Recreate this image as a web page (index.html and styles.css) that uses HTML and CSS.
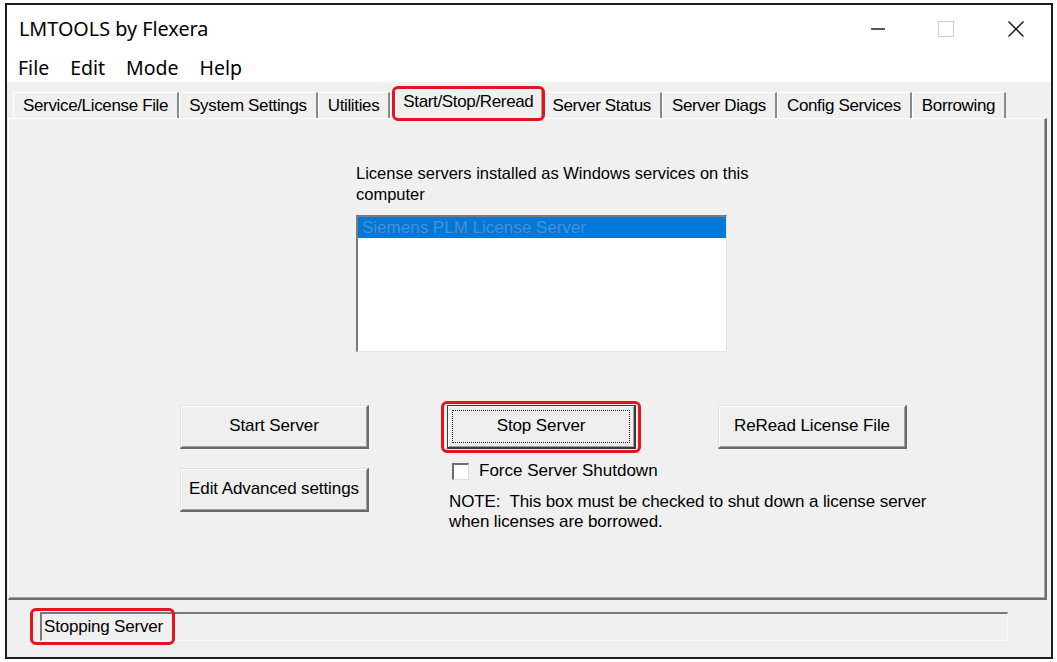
FILE: index.html
```html
<!DOCTYPE html>
<html>
<head>
<meta charset="utf-8">
<title>LMTOOLS by Flexera</title>
<link rel="stylesheet" href="styles.css">
</head>
<body>
<div class="window">
  <div class="titlebar">
    <span class="title">LMTOOLS by Flexera</span>
    <div class="controls">
      <span class="ctl ctl-min"><svg width="14" height="2" viewBox="0 0 14 2"><line x1="0" y1="1" x2="14" y2="1" stroke="#111" stroke-width="1.4"/></svg></span>
      <span class="ctl ctl-max"><svg width="16" height="16" viewBox="0 0 16 16"><rect x="0.5" y="0.5" width="15" height="15" fill="none" stroke="#cfcfcf" stroke-width="1.2"/></svg></span>
      <span class="ctl ctl-close"><svg width="16" height="16" viewBox="0 0 16 16"><path d="M0.5 0.5 L15.5 15.5 M15.5 0.5 L0.5 15.5" stroke="#111" stroke-width="1.4" fill="none"/></svg></span>
    </div>
  </div>
  <div class="menubar">
    <span class="menu">File</span>
    <span class="menu">Edit</span>
    <span class="menu">Mode</span>
    <span class="menu">Help</span>
  </div>
  <div class="client">
    <div class="tabs">
      <span class="tab">Service/License File</span>
      <span class="tab">System Settings</span>
      <span class="tab">Utilities</span>
      <span class="tab tab-active">Start/Stop/Reread</span>
      <span class="tab">Server Status</span>
      <span class="tab">Server Diags</span>
      <span class="tab">Config Services</span>
      <span class="tab">Borrowing</span>
    </div>
    <div class="panel">
      <div class="listgroup">
        <p class="label">License servers installed as Windows services on this<br>computer</p>
        <div class="listbox">
          <div class="item item-sel">Siemens PLM License Server</div>
        </div>
      </div>
      <div class="actions">
        <div class="col col1">
          <button class="btn">Start Server</button>
          <button class="btn">Edit Advanced settings</button>
        </div>
        <div class="col col2">
          <button class="btn btn-default"><span class="focus">Stop Server</span></button>
          <label class="check"><span class="box"></span><span>Force Server Shutdown</span></label>
          <p class="note">NOTE:&nbsp; This box must be checked to shut down a license server<br>when licenses are borrowed.</p>
        </div>
        <div class="col col3">
          <button class="btn">ReRead License File</button>
        </div>
      </div>
    </div>
    <div class="statusbar">
      <div class="field"><span class="status-text">Stopping Server</span></div>
    </div>
  </div>
</div>
</body>
</html>
```
FILE: styles.css
```css
html, body {
  margin: 0;
  padding: 0;
  background: #ffffff;
}

body {
  font-family: "Liberation Sans", Arial, sans-serif;
  font-size: 17px;
  color: #000;
}

.window {
  box-sizing: border-box;
  width: 1048px;
  height: 656px;
  margin: 3px 0 0 5px;
  border: 2px solid #1e1e1e;
  background: #f0f0f0;
  display: flex;
  flex-direction: column;
}

/* title bar */
.titlebar {
  height: 43px;
  background: #fff;
  display: flex;
  align-items: center;
  padding-top: 4px;
  box-sizing: border-box;
}

.title {
  font-family: "Noto Sans", "Open Sans", sans-serif;
  font-size: 19.8px;
  padding-left: 12px;
}

.controls {
  margin-left: auto;
  display: flex;
  align-items: center;
  height: 100%;
}

.ctl {
  display: flex;
  align-items: center;
  justify-content: center;
  height: 100%;
}

.ctl svg { display: block; }
.ctl-min { width: 66px; }
.ctl-max { width: 70px; }
.ctl-close { width: 70px; }

/* menu bar */
.menubar {
  height: 34px;
  background: #fff;
  display: flex;
  align-items: center;
  gap: 21px;
  padding: 4px 0 0 11px;
  box-sizing: border-box;
  font-family: "Noto Sans", "Open Sans", sans-serif;
  font-size: 19.5px;
}

/* client area */
.client {
  flex: 1;
  display: flex;
  flex-direction: column;
  background: #f0f0f0;
}

.tabs {
  height: 36px;
  box-sizing: border-box;
  padding: 6px 0 0 6px;
  display: flex;
  align-items: flex-end;
}

.tab {
  height: 26px;
  box-sizing: border-box;
  padding: 0 9px 0 9px;
  display: flex;
  align-items: center;
  border-left: 1px solid #fff;
  border-top: 1px solid #fff;
  border-right: 2px solid #8a8a8a;
  white-space: nowrap;
  letter-spacing: -0.35px;
}

.tab-active {
  position: relative;
  height: 30px;
  padding: 0 8px 4px 7px;
  margin-left: 5px;
  border-right: 1px solid #a0a0a0;
  background: #f0f0f0;
}

.tab-active::after {
  content: "";
  position: absolute;
  left: -4px;
  right: -4px;
  top: -3px;
  bottom: -3px;
  border: 3px solid #e5141b;
  border-radius: 6px;
  box-sizing: border-box;
}

.panel {
  height: 482px;
  box-sizing: border-box;
  margin: 0 4px 0 1px;
  border-top: 1px solid #fff;
  border-left: 1px solid #fff;
  border-right: 2px solid #6e6e6e;
  border-bottom: 2px solid #6e6e6e;
  box-shadow: inset -1px -1px 0 #a0a0a0;
}

.listgroup {
  margin-left: 347px;
  padding-top: 44px;
}

.label {
  margin: 0;
  line-height: 21px;
  font-size: 16.5px;
}

.listbox {
  margin-top: 10px;
  width: 371px;
  height: 137px;
  box-sizing: border-box;
  background: #fff;
  border-style: solid;
  border-width: 2px 1px 1px 2px;
  border-color: #7a7a7a #e3e3e3 #e3e3e3 #7a7a7a;
}

.item {
  height: 21px;
  line-height: 21px;
  padding-left: 4px;
  white-space: nowrap;
}

.item-sel {
  background: #0078d7;
  color: #4a8fd6;
}

.actions {
  margin-top: 53px;
  margin-left: 171px;
  display: flex;
}

.col {
  display: flex;
  flex-direction: column;
}

.col1 { width: 189px; gap: 19px; }
.col2 { width: 271px; margin-left: 78px; }
.col3 { width: 189px; }

.btn {
  width: 189px;
  height: 44px;
  box-sizing: border-box;
  font-family: "Liberation Sans", Arial, sans-serif;
  font-size: 17px;
  color: #000;
  letter-spacing: -0.1px;
  background: #efefef;
  border-style: solid;
  border-width: 1px 2px 2px 1px;
  border-color: #e3e3e3 #6a6a6a #6a6a6a #e3e3e3;
  box-shadow: inset 1px 1px 0 #fff, inset -1px -1px 0 #a0a0a0;
  padding: 0 0 2px 0;
  margin: 0;
  display: flex;
  align-items: center;
  justify-content: center;
}

.btn-default {
  position: relative;
  padding: 4px;
  border-color: #3a3a3a #3a3a3a #3a3a3a #3a3a3a;
  border-width: 1px 2px 2px 1px;
}

.btn-default::after {
  content: "";
  position: absolute;
  left: -7px;
  right: -7px;
  top: -5px;
  bottom: -6px;
  border: 3px solid #e5141b;
  border-radius: 6px;
}

.focus {
  flex: 1;
  align-self: stretch;
  display: flex;
  align-items: center;
  justify-content: center;
  border: 1px dotted #222;
  padding-bottom: 1px;
}

.check {
  margin-top: 12px;
  height: 20px;
  display: flex;
  align-items: center;
}

.box {
  width: 17px;
  height: 17px;
  box-sizing: border-box;
  margin: 0 10px 0 5px;
  background: #fff;
  border-style: solid;
  border-width: 2px 1px 1px 2px;
  border-color: #6e6e6e #dcdcdc #dcdcdc #6e6e6e;
}

.note {
  margin: 11px 0 0 2px;
  line-height: 20px;
  white-space: nowrap;
  letter-spacing: -0.1px;
}

/* status bar */
.statusbar {
  padding: 12px 0 0 33px;
}

.field {
  width: 968px;
  height: 29px;
  box-sizing: border-box;
  border-style: solid;
  border-width: 2px 1px 1px 2px;
  border-color: #7a7a7a #fafafa #fafafa #7a7a7a;
  display: flex;
  align-items: center;
}

.status-text {
  position: relative;
  padding-left: 2px;
  letter-spacing: -0.2px;
}

.status-text::after {
  content: "";
  position: absolute;
  left: -12px;
  right: -12px;
  top: -9px;
  bottom: -8px;
  border: 3px solid #e5141b;
  border-radius: 6px;
}
```
